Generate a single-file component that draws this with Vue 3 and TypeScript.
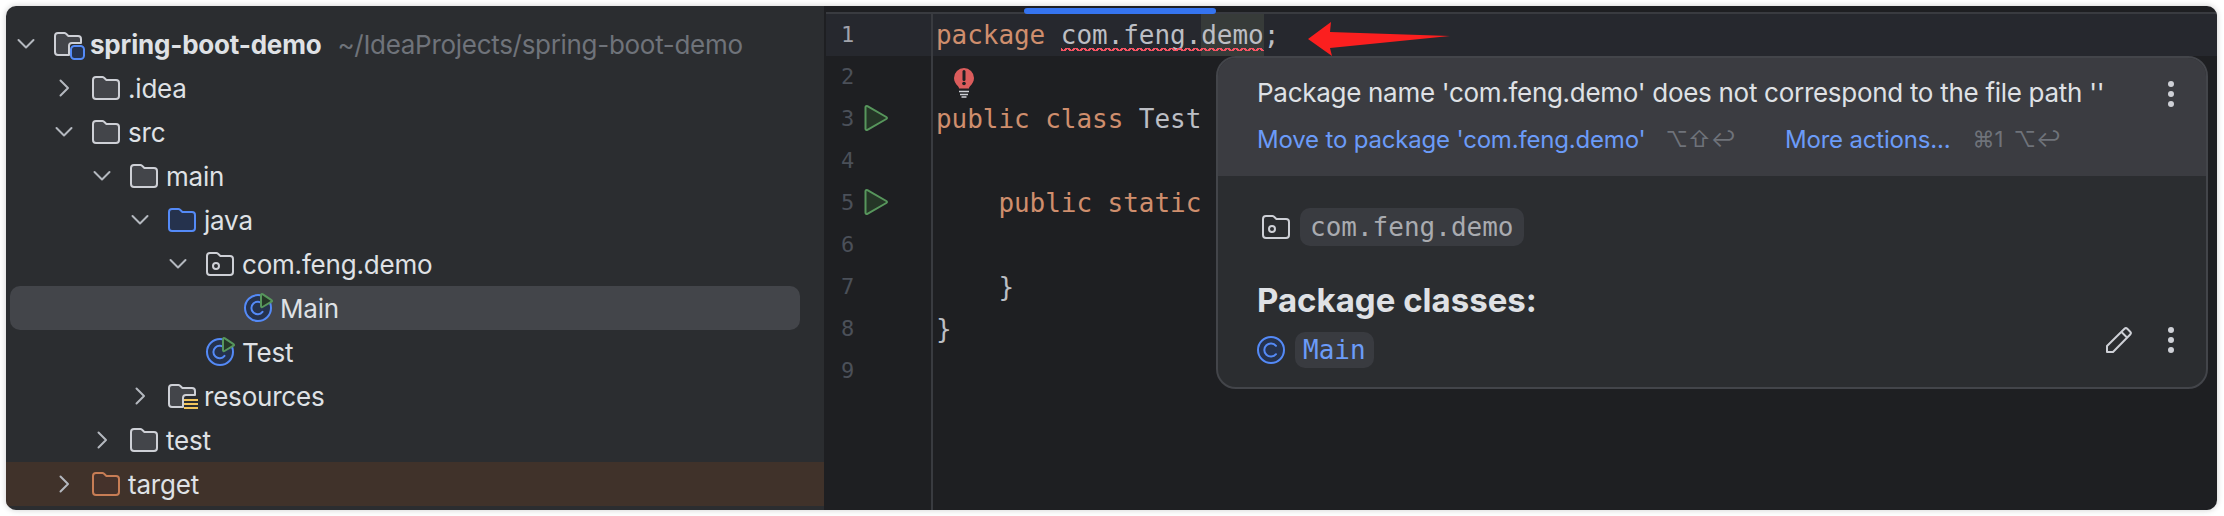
<script setup lang="ts">
type Kind = 'root' | 'folder' | 'source' | 'package' | 'class' | 'resources' | 'excluded'
interface TreeRow { name: string; depth: number; kind: Kind; open?: boolean; leaf?: boolean; selected?: boolean; hint?: string }

const rows: TreeRow[] = [
  { name: 'spring-boot-demo', depth: 0, kind: 'root', open: true, hint: '~/IdeaProjects/spring-boot-demo' },
  { name: '.idea', depth: 1, kind: 'folder' },
  { name: 'src', depth: 1, kind: 'folder', open: true },
  { name: 'main', depth: 2, kind: 'folder', open: true },
  { name: 'java', depth: 3, kind: 'source', open: true },
  { name: 'com.feng.demo', depth: 4, kind: 'package', open: true },
  { name: 'Main', depth: 5, kind: 'class', leaf: true, selected: true },
  { name: 'Test', depth: 4, kind: 'class', leaf: true },
  { name: 'resources', depth: 3, kind: 'resources' },
  { name: 'test', depth: 2, kind: 'folder' },
  { name: 'target', depth: 1, kind: 'excluded' },
]

const folderPath = 'M1 4a3 3 0 0 1 3-3h6.4a2 2 0 0 1 1.4.6L14.4 4H24a3 3 0 0 1 3 3v13a3 3 0 0 1-3 3H4a3 3 0 0 1-3-3Z'
const notchedPath = 'M15 23H4a3 3 0 0 1-3-3V4a3 3 0 0 1 3-3h6.4a2 2 0 0 1 1.4.6L14.4 4H24a3 3 0 0 1 3 3v4H18a3 3 0 0 0-3 3Z'

function rowPad(r: TreeRow): string {
  return (r.kind === 'excluded' ? 8 : 4) + 38 * r.depth + 'px'
}

const lineNumbers = [1, 2, 3, 4, 5, 6, 7, 8, 9]
</script>

<template>
  <div class="page">
    <div class="window">
      <aside class="sidebar">
        <div
          v-for="r in rows"
          :key="r.name"
          class="row"
          :class="{ selected: r.selected, excluded: r.kind === 'excluded' }"
          :style="{ paddingLeft: rowPad(r) }"
        >
          <span class="chev">
            <svg v-if="!r.leaf" width="24" height="24" viewBox="0 0 24 24" fill="none" stroke="#b4b8bf" stroke-width="2" stroke-linecap="round" stroke-linejoin="round">
              <path v-if="r.open" d="M4.5 8 12 15.5 19.5 8" />
              <path v-else d="M8.5 4.5 16 12 8.5 19.5" />
            </svg>
          </span>
          <span class="icon">
            <svg v-if="r.kind === 'class'" class="ico-svg" width="28" height="28" viewBox="0 0 28 28" fill="none">
              <circle cx="14" cy="14" r="13" fill="#25324d" stroke="#548af7" stroke-width="2" />
              <path d="M18.500 10.200A6.200 6.200 0 1 0 18.500 17.800" stroke="#548af7" stroke-width="2" stroke-linecap="round" />
              <path d="M17 0.800v11.400c0 .8.8 1.200 1.500.8l9-5.300c.7-.4.7-1.200 0-1.600l-9-5.900c-.7-.4-1.500 0-1.500.6Z" fill="#253627" stroke="#57965c" stroke-width="2" stroke-linejoin="round" />
            </svg>
            <svg v-else width="28" height="24" viewBox="0 0 28 24" fill="none" class="ico-svg">
              <template v-if="r.kind === 'root'">
                <path :d="notchedPath" fill="#43454a" stroke="#ced0d6" stroke-width="2" stroke-linejoin="round" />
                <rect x="17" y="14" width="13" height="13" rx="3.500" fill="#25324d" stroke="#548af7" stroke-width="2" />
              </template>
              <template v-else-if="r.kind === 'resources'">
                <path :d="notchedPath" fill="#43454a" stroke="#ced0d6" stroke-width="2" stroke-linejoin="round" />
                <path d="M16 16h14M16 20h14M16 24h14" stroke="#f2c55c" stroke-width="2.200" />
              </template>
              <path v-else-if="r.kind === 'source'" :d="folderPath" fill="#25324d" stroke="#548af7" stroke-width="2" stroke-linejoin="round" />
              <path v-else-if="r.kind === 'excluded'" :d="folderPath" fill="#45322b" stroke="#c77d55" stroke-width="2" stroke-linejoin="round" />
              <template v-else-if="r.kind === 'package'">
                <path :d="folderPath" fill="#2b2d30" stroke="#ced0d6" stroke-width="2" stroke-linejoin="round" />
                <circle cx="10" cy="14" r="3" stroke="#ced0d6" stroke-width="2" />
              </template>
              <path v-else :d="folderPath" fill="#43454a" stroke="#ced0d6" stroke-width="2" stroke-linejoin="round" />
            </svg>
          </span>
          <span class="name" :class="{ bold: r.kind === 'root' }">{{ r.name }}</span>
          <span v-if="r.hint" class="hint">{{ r.hint }}</span>
        </div>
      </aside>

      <main class="editor">
        <div class="tab-mark"></div>
        <div class="top-strip"></div>
        <div class="lines">
          <div v-for="n in lineNumbers" :key="n" class="line" :class="{ current: n === 1 }">
            <div class="gutter">
              <span class="num">{{ n }}</span>
              <svg v-if="n === 3 || n === 5" class="run" width="24" height="28" viewBox="0 0 24 28" fill="none">
                <path d="M1.500 3.200v21.600c0 1 1 1.500 1.900 1l18.900-10.800c.9-.5.9-1.500 0-2L3.400 2.200c-.9-.5-1.900 0-1.900 1Z" fill="#253627" stroke="#57965c" stroke-width="2" stroke-linejoin="round" />
              </svg>
            </div>
            <div class="code">
              <template v-if="n === 1">
                <span class="kw">{{ 'package ' }}</span><span class="err">com.feng.<span class="hit">demo</span></span><span class="punct">;</span>
              </template>
              <svg v-else-if="n === 2" class="bulb" width="20" height="30" viewBox="0 0 20 30" fill="none">
                <path d="M10 0a10 10 0 0 0-10 10c0 3.600 1.900 6 3.800 8 .9 1 1.200 1.800 1.200 2.500h10c0-.7.300-1.500 1.200-2.500 1.900-2 3.800-4.400 3.800-8A10 10 0 0 0 10 0Z" fill="#db5c5c" />
                <path d="M10 3.500v8" stroke="#1e1f22" stroke-width="3" stroke-linecap="round" />
                <circle cx="10" cy="15.500" r="1.800" fill="#1e1f22" />
                <path d="M5 23.500h10M6 26.500h8M7.500 29h5" stroke="#ced0d6" stroke-width="1.600" />
              </svg>
              <template v-else-if="n === 3"><span class="kw">public class</span> Test</template>
              <template v-else-if="n === 5"><span class="kw indent">public static</span></template>
              <span v-else-if="n === 7" class="indent">}</span>
              <template v-else-if="n === 8">}</template>
            </div>
          </div>
          <div class="line filler">
            <div class="gutter"></div>
          </div>
        </div>

        <section class="popup">
          <header class="popup-head">
            <div class="head-text">
              <div class="msg">Package name 'com.feng.demo' does not correspond to the file path ''</div>
              <div class="actions">
                <span class="link">Move to package 'com.feng.demo'</span>
                <span class="keys first">⌥⇧↩</span>
                <span class="link more">More actions...</span>
                <span class="keys second">⌘1</span>
                <span class="keys third">⌥↩</span>
              </div>
            </div>
            <span class="kebab"><i></i><i></i><i></i></span>
          </header>
          <div class="popup-body">
            <div class="pkg-row">
              <svg width="28" height="24" viewBox="0 0 28 24" fill="none">
                <path :d="folderPath" fill="#2b2d30" stroke="#ced0d6" stroke-width="2" stroke-linejoin="round" />
                <circle cx="10" cy="14" r="3" stroke="#ced0d6" stroke-width="2" />
              </svg>
              <code class="chip">com.feng.demo</code>
            </div>
            <h3 class="title">Package classes:</h3>
            <div class="class-row">
              <svg width="28" height="28" viewBox="0 0 28 28" fill="none">
                <circle cx="14" cy="14" r="13" fill="#25324d" stroke="#548af7" stroke-width="2" />
                <path d="M19 9.800A6.600 6.600 0 1 0 19 18.200" stroke="#548af7" stroke-width="2" stroke-linecap="round" />
              </svg>
              <code class="chip blue">Main</code>
            </div>
            <div class="tools">
              <svg width="26" height="26" viewBox="0 0 26 26" fill="none" stroke="#ced0d6" stroke-width="2" stroke-linejoin="round">
                <path d="M1 25v-6L18.500 1.800a2 2 0 0 1 2.800 0l2.900 2.900a2 2 0 0 1 0 2.800L7 25Z" />
                <path d="M15.500 5l5.500 5.500" />
              </svg>
              <span class="kebab"><i></i><i></i><i></i></span>
            </div>
          </div>
        </section>

        <svg class="arrow" width="142" height="34" viewBox="0 0 142 34">
          <path d="M0 17 23 0 22 10 142 14 22 26 24 34Z" fill="#fb1f1f" />
        </svg>
      </main>
    </div>
  </div>
</template>

<style>
html, body { margin: 0; background: #fff; }
</style>

<style scoped>
.page {
  width: 2224px;
  height: 516px;
  padding: 6px 7px 6px 6px;
  box-sizing: border-box;
  background: #fff;
  font-family: Inter, "Liberation Sans", sans-serif;
  overflow: hidden;
}
.window {
  display: flex;
  height: 100%;
  border-radius: 10px;
  overflow: hidden;
  box-shadow: 0 0 6px rgba(0, 0, 0, 0.2);
}
.sidebar {
  width: 818px;
  flex: none;
  box-sizing: border-box;
  padding-top: 16px;
  background: #2b2d30;
  color: #dfe1e5;
  font-size: 26px;
  letter-spacing: -0.2px;
}
.row {
  display: flex;
  align-items: center;
  height: 44px;
  margin: 0 24px 0 4px;
  white-space: nowrap;
}
.row.selected { background: #43454a; border-radius: 10px; }
.row.excluded { margin: 0; background: #40322a; }
.chev { width: 24px; height: 24px; flex: none; margin-right: 16px; }
.chev svg { display: block; }
.icon { width: 28px; flex: none; margin-right: 8px; display: flex; align-items: center; }
.ico-svg { overflow: visible; }
.name.bold { font-weight: 700; margin-right: 16px; }
.hint { color: #6f737a; letter-spacing: -0.3px; }

.editor {
  position: relative;
  flex: 1;
  display: flex;
  flex-direction: column;
  box-sizing: border-box;
  padding: 6px 0 0 2px;
  background: #1e1f22;
  font-family: "DejaVu Sans Mono", "Liberation Mono", monospace;
  font-size: 26px;
  color: #bcbec4;
}
.tab-mark {
  position: absolute;
  left: 200px;
  top: 2px;
  width: 192px;
  height: 6px;
  background: #3574f0;
  border-radius: 3px;
}
.top-strip { height: 2px; background: #393b40; flex: none; }
.lines { flex: 1; display: flex; flex-direction: column; }
.line { display: flex; height: 42px; flex: none; }
.line.current { background: #26282e; }
.line.filler { flex: 1; height: auto; }
.gutter {
  width: 105px;
  flex: none;
  display: flex;
  align-items: center;
  border-right: 2px solid #393b40;
}
.num {
  width: 14px;
  margin: 0 9px 0 15px;
  font-size: 22px;
  line-height: 42px;
  color: #4b5059;
}
.current .num { color: #a1a3ab; }
.run { margin-top: -2px; }
.code {
  padding-left: 3px;
  line-height: 42px;
  white-space: pre;
  letter-spacing: -0.05px;
}
.kw { color: #cf8e6d; }
.indent { margin-left: 62.4px; }
.err {
  display: inline-block;
  height: 42px;
  position: relative;
}
.err::after {
  content: "";
  position: absolute;
  left: 0;
  right: 0;
  bottom: 5px;
  height: 3px;
  background:
    linear-gradient(135deg, transparent 45%, #f75464 45%, #f75464 70%, transparent 70%) 0 0 / 8px 3px repeat-x,
    linear-gradient(45deg, transparent 45%, #f75464 45%, #f75464 70%, transparent 70%) 4px 0 / 8px 3px repeat-x;
}
.hit { display: inline-block; height: 42px; background: #373b39; }
.punct { color: #bcbec4; }
.bulb { display: block; margin: 12px 0 0 18px; }

.arrow { position: absolute; left: 484px; top: 16px; }

.popup {
  position: absolute;
  left: 392px;
  top: 50px;
  width: 992px;
  height: 333px;
  box-sizing: border-box;
  display: flex;
  flex-direction: column;
  border: 2px solid #43454a;
  border-radius: 20px;
  overflow: hidden;
  background: #2b2d30;
  font-family: Inter, "Liberation Sans", sans-serif;
}
.popup-head {
  height: 118px;
  flex: none;
  box-sizing: border-box;
  display: flex;
  justify-content: space-between;
  align-items: flex-start;
  padding: 12px 32px 0 39px;
  background: #3b3c41;
}
.head-text { display: flex; flex-direction: column; }
.msg { font-size: 26px; line-height: 46px; color: #dfe1e5; white-space: nowrap; letter-spacing: -0.29px; }
.actions { display: flex; align-items: center; height: 46px; font-size: 24px; letter-spacing: -0.18px; white-space: nowrap; }
.link { color: #6b9bf8; }
.keys { color: #6f737a; font-size: 22px; letter-spacing: 0; }
.first { margin-left: 20px; }
.more { margin-left: 49px; }
.second { margin-left: 22px; }
.third { margin-left: 10px; }
.kebab { display: flex; flex-direction: column; gap: 4px; width: 6px; margin-top: 11px; flex: none; }
.kebab i { width: 6px; height: 6px; border-radius: 50%; background: #ced0d6; }
.popup-body {
  position: relative;
  flex: 1;
  display: flex;
  flex-direction: column;
  padding: 32px 0 0 39px;
}
.pkg-row { display: flex; align-items: center; gap: 10px; padding-left: 5px; }
.chip {
  display: inline-block;
  padding: 0 10px;
  height: 38px;
  line-height: 38px;
  border-radius: 10px;
  background: #393b40;
  color: #a9abb0;
  font-family: "DejaVu Sans Mono", "Liberation Mono", monospace;
  font-size: 26px;
}
.chip.blue { height: 36px; line-height: 36px; color: #6b9bf8; padding: 0 8px; }
.title {
  margin: 32px 0 0;
  height: 44px;
  line-height: 44px;
  font-size: 33px;
  font-weight: 700;
  color: #dfe1e5;
  white-space: nowrap;
}
.class-row { display: flex; align-items: center; gap: 10px; margin-top: 10px; }
.tools {
  position: absolute;
  right: 32px;
  bottom: 34px;
  display: flex;
  align-items: center;
  gap: 36px;
}
.tools .kebab { margin-top: 0; }
</style>
